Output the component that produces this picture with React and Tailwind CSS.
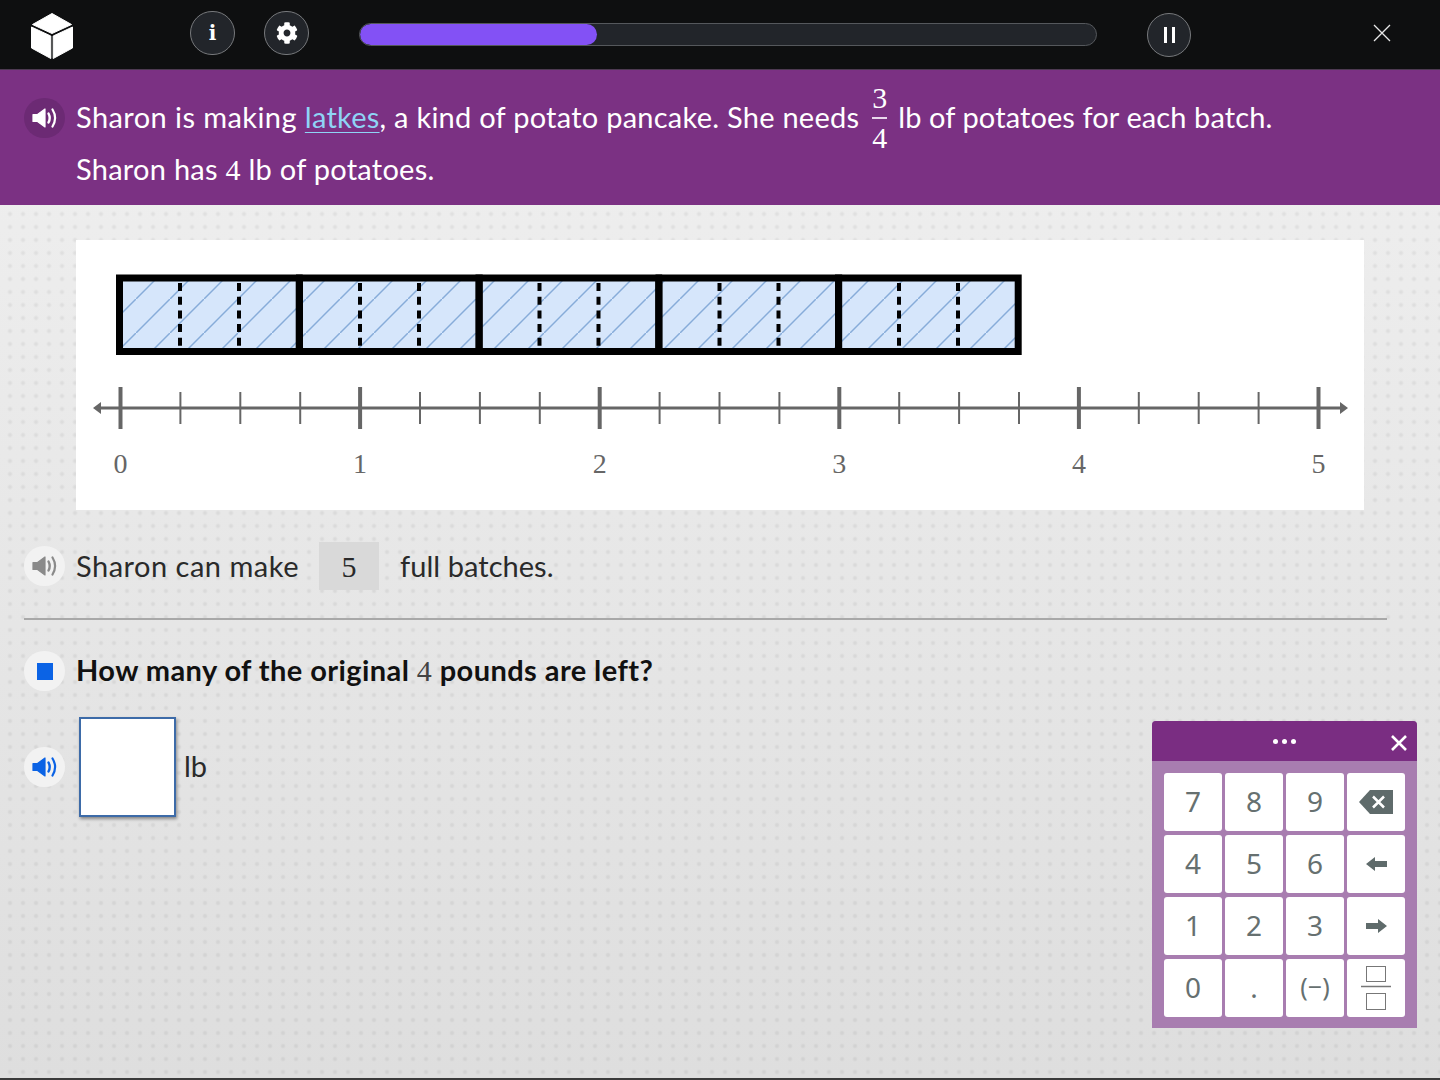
import { FaCog } from "react-icons/fa";

const mathFont = "font-['Liberation_Serif',serif] text-[30px]";

function Speaker({ circle, color }) {
  return (
    <div className={`flex h-10 w-[41px] shrink-0 items-center justify-center rounded-full ${circle}`}>
      <svg width="26" height="22" viewBox="0 0 26 22" fill="none" className={color}>
        <path d="M1 7.500h4.500L13 2v18l-7.500-5.500H1z" fill="currentColor" stroke="currentColor" strokeWidth="1.200" strokeLinejoin="round" />
        <path d="M16.500 6.500c1.600 3 1.600 6 0 9" stroke="currentColor" strokeWidth="2.400" strokeLinecap="round" />
        <path d="M20.500 2.500c3.300 5.400 3.300 11.600 0 17" stroke="currentColor" strokeWidth="2.200" strokeLinecap="round" />
      </svg>
    </div>
  );
}

function TopBar() {
  return (
    <div className="flex h-[70px] shrink-0 items-center border-b border-[#4d3a52] bg-[#0e0f10]">
      <svg width="42" height="46" viewBox="0 0 42 46" className="ml-[31px] mt-[2px]" fill="#fff" stroke="#fff" strokeWidth="1" strokeLinejoin="round">
        <path d="M21 .5 40.500 11.500 21 20.500 1.500 11.500z" />
        <path d="M.5 14 19.800 23v22.500L.5 35z" />
        <path d="M41.500 14 22.200 23v22.500L41.500 35z" />
      </svg>
      <div className="ml-[117px] -mt-[3px] flex h-[44px] w-[45px] items-center justify-center rounded-full border border-[#77797c] bg-[#22252a] font-['DejaVu_Serif',serif] text-[20px] font-bold text-white">
        i
      </div>
      <div className="ml-[29px] -mt-[3px] flex h-[44px] w-[45px] items-center justify-center rounded-full border border-[#77797c] bg-[#22252a] text-white">
        <FaCog size={22} />
      </div>
      <div className="ml-[50px] h-[23px] w-[738px] overflow-hidden rounded-full border border-[#55585c] bg-[#22252a]">
        <div className="h-full w-[237px] rounded-full bg-[#8351f5]" />
      </div>
      <div className="ml-[50px] mt-[1px] flex h-[44px] w-[44px] items-center justify-center gap-[5px] rounded-full border border-[#77797c] bg-[#22252a]">
        <span className="h-[16px] w-[3px] bg-white" />
        <span className="h-[16px] w-[3px] bg-white" />
      </div>
      <svg width="20" height="20" viewBox="0 0 20 20" className="ml-[181px] -mt-[3px]" stroke="#e8e8e8" strokeWidth="1.300">
        <path d="M2 2 18 18M18 2 2 18" />
      </svg>
    </div>
  );
}

function Prompt() {
  return (
    <div className="h-[135px] shrink-0 bg-[#7b3183] pl-[24px] pt-[13px] text-[29px] leading-[34px] text-white">
      <div className="flex h-[70px] items-center">
        <Speaker circle="bg-[#6c2a74]" color="text-white" />
        <span className="ml-[11px] pb-[2px] tracking-[0.25px]">
          <span className="tracking-[0.42px]">Sharon is making </span>
          <span className="text-[#8fd4f5] underline decoration-1 underline-offset-[4px]">latkes</span>, a kind of potato pancake. She needs
        </span>
        <span className={`ml-[13px] mr-[11px] flex w-[15px] flex-col items-center ${mathFont} leading-[32px]`}>
          <span>3</span>
          <span className="my-[3px] h-[2px] w-[15px] bg-[#e9d8ec]" />
          <span>4</span>
        </span>
        <span className="pb-[2px] tracking-[0.1px]">lb of potatoes for each batch.</span>
      </div>
      <p className="ml-[52px] -mt-[1px] tracking-[0.26px]">
        Sharon has <span className={mathFont}>4</span> lb of potatoes.
      </p>
    </div>
  );
}

function BarModel() {
  const starts = [119.500, 299.500, 479, 659, 838.500];
  return (
    <svg width="1288" height="270" viewBox="76 240 1288 270" className="block">
      <defs>
        <pattern id="hatch" width="34" height="34" patternUnits="userSpaceOnUse" patternTransform="translate(0 27)">
          <rect width="34" height="34" fill="#d6e6fb" />
          <path d="M-4 38 38-4" stroke="#87acd9" strokeWidth="1.500" />
        </pattern>
      </defs>
      <rect x="119.500" y="278" width="899" height="73.500" fill="url(#hatch)" />
      {starts.map((x) => (
        <g key={x}>
          <path d={`M${x + 60.500} 283V348M${x + 119.500} 283V348`} stroke="#000" strokeWidth="4" strokeDasharray="8 5.700" />
          <rect x={x} y="278" width="179.700" height="73.500" fill="none" stroke="#000" strokeWidth="7" />
        </g>
      ))}
      <path d="M100 408H1340" stroke="#666" strokeWidth="3" />
      <path d="M93 408 101 402V414z M1348 408 1340 402V414z" fill="#666" />
      {Array.from({ length: 21 }, (_, i) => {
        const x = 120.500 + i * 59.900;
        const major = i % 4 === 0;
        return (
          <path
            key={i}
            d={major ? `M${x} 387V429` : `M${x} 392V424`}
            stroke="#666"
            strokeWidth={major ? 4 : 2}
          />
        );
      })}
      {[0, 1, 2, 3, 4, 5].map((n) => (
        <text
          key={n}
          x={120.500 + n * 239.600}
          y="473"
          textAnchor="middle"
          fill="#666"
          fontSize="28"
          fontFamily="'Liberation Serif', serif"
        >
          {n}
        </text>
      ))}
    </svg>
  );
}

function Keypad() {
  const keys = ["7", "8", "9", "back", "4", "5", "6", "left", "1", "2", "3", "right", "0", ".", "(−)", "frac"];
  const icons = {
    back: (
      <svg width="34" height="24" viewBox="0 0 34 24">
        <path d="M11 0h23v24H11L0 12z" fill="#5f6b6b" />
        <path d="M14 6.500 25 17.500M25 6.500 14 17.500" stroke="#fff" strokeWidth="2.500" />
      </svg>
    ),
    left: (
      <svg width="21" height="14" viewBox="0 0 21 14">
        <path d="M0 7 9 0v4h12v6H9v4z" fill="#5f6b6b" />
      </svg>
    ),
    right: (
      <svg width="21" height="14" viewBox="0 0 21 14">
        <path d="M21 7 12 0v4H0v6h12v4z" fill="#5f6b6b" />
      </svg>
    ),
    frac: (
      <svg width="30" height="44" viewBox="0 0 30 44" fill="none" stroke="#777">
        <rect x="5.500" y="0.500" width="19" height="15" />
        <path d="M0 20.500H30" strokeWidth="1.500" />
        <rect x="5.500" y="27.500" width="19" height="16" />
      </svg>
    ),
  };

  return (
    <div className="absolute left-[1152px] top-[721px] w-[265px] overflow-hidden rounded-t-[4px] bg-[#a87db0]">
      <div className="relative flex h-[40px] items-center justify-center bg-[#7a2d82]">
        <span className="flex gap-[4px]">
          <span className="h-[5px] w-[5px] rounded-full bg-white" />
          <span className="h-[5px] w-[5px] rounded-full bg-white" />
          <span className="h-[5px] w-[5px] rounded-full bg-white" />
        </span>
        <svg width="16" height="16" viewBox="0 0 16 16" className="absolute right-[10px] top-[14px]" stroke="#fff" strokeWidth="2.600">
          <path d="M1 1 15 15M15 1 1 15" />
        </svg>
      </div>
      <div className="grid grid-cols-[repeat(4,58px)] gap-x-[3px] gap-y-[4.500px] px-[12px] pb-[11.500px] pt-[12px]">
        {keys.map((key) => (
          <div
            key={key}
            className={`flex h-[57.500px] items-center justify-center rounded-[3px] bg-white font-['Noto_Sans',sans-serif] text-[28px] text-[#667070] ${icons[key] ? "" : "pb-[2px]"}`}
          >
            {icons[key] || (key === "(−)" ? <span className="text-[25px]">{key}</span> : key)}
          </div>
        ))}
      </div>
    </div>
  );
}

export default function App() {
  return (
    <div className="relative flex h-[1080px] flex-col overflow-hidden border-b-2 border-[#3a3a3a] bg-[linear-gradient(180deg,#f1f1f1,#dedede)] font-['Lato',sans-serif] text-[#2a2a2a]">
      <TopBar />
      <Prompt />
      <div className="flex-1 bg-[radial-gradient(circle,rgba(0,0,0,0.055)_1.500px,transparent_2.500px)] bg-[size:13px_13px] bg-[position:3.500px_2.500px] pl-[24px] pt-[35px]">
        <div className="ml-[52px] h-[270px] w-[1288px] bg-white">
          <BarModel />
        </div>
        <div className="mt-[31px] flex h-[50px] items-center text-[29px]">
          <Speaker circle="bg-[#f2f2f2]" color="text-[#8a8a8a]" />
          <span className="ml-[11px] w-[223px] whitespace-nowrap tracking-[0.5px]">Sharon can make</span>
          <span className={`ml-[20px] flex h-[48px] w-[60px] items-center justify-center bg-[#d9d9d9] ${mathFont}`}>5</span>
          <span className="ml-[21px] tracking-[0.05px]">full batches.</span>
        </div>
        <div className="mt-[27px] h-[2px] w-[1363px] bg-[#a8a8a8]" />
        <div className="mt-[31px] flex h-[40px] items-center text-[29px] font-bold tracking-[0.42px] text-[#111]">
          <div className="flex h-10 w-[41px] shrink-0 items-center justify-center rounded-full bg-[#f2f2f2]">
            <span className="h-[17px] w-[16px] bg-[#0b63e5]" />
          </div>
          <span className="ml-[11px] pb-[2px]">
            How many of the original <span className={`font-normal text-[#444] ${mathFont}`}>4</span> pounds are left?
          </span>
        </div>
        <div className="mt-[26px] flex h-[100px] items-center text-[29px]">
          <Speaker circle="bg-[#f2f2f2]" color="text-[#0b63e5]" />
          <div className="ml-[14px] h-[100px] w-[97px] border-2 border-[#3d6ba8] bg-white shadow-[1px_2px_3px_rgba(0,0,0,0.4)]" />
          <span className="ml-[8px] pb-[2px]">lb</span>
        </div>
      </div>
      <Keypad />
    </div>
  );
}
